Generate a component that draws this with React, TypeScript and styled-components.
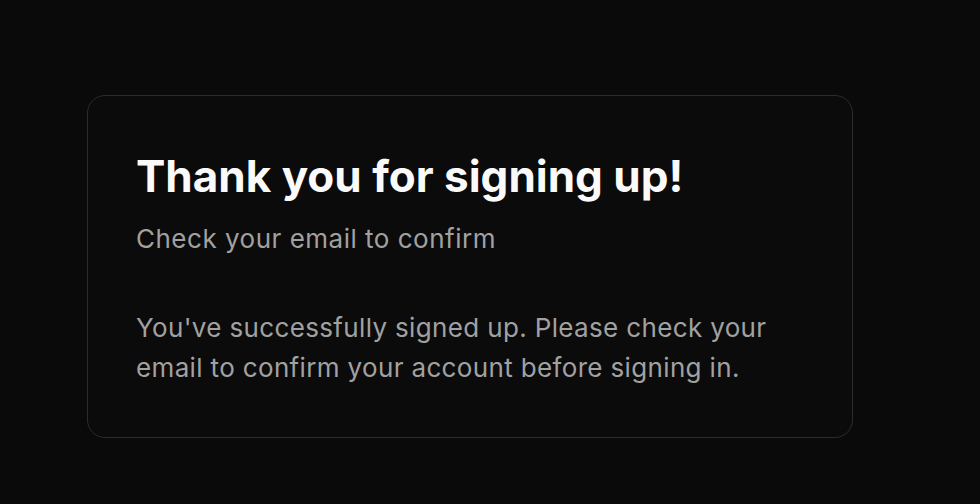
import React from "react";
import styled, { createGlobalStyle } from "styled-components";

const Global = createGlobalStyle`
  html, body { margin: 0; padding: 0; background: #0a0a0a; }
  body { font-family: Inter, "Liberation Sans", sans-serif; -webkit-font-smoothing: antialiased; }
`;

const Page = styled.div`
  padding: 95px 0 0 87px;
  height: 504px;
  box-sizing: border-box;
`;

const Card = styled.div`
  width: 766px;
  height: 343px;
  box-sizing: border-box;
  border: 1.5px solid #2c2c2c;
  border-radius: 18px;
  background: #0b0b0b;
  padding: 48px 48px;
  display: flex;
  flex-direction: column;
`;

const Title = styled.h1`
  margin: 0;
  color: #fafafa;
  font-size: 44px;
  font-weight: 700;
  letter-spacing: 0;
  line-height: 64px;
`;

const Subtitle = styled.p`
  margin: 11px 0 0;
  color: #a1a1a1;
  font-size: 26px;
  letter-spacing: 0.5px;
  line-height: 40px;
`;

const Body = styled.p`
  margin: 49px 0 0;
  max-width: 650px;
  color: #a1a1a1;
  font-size: 26px;
  letter-spacing: 0.35px;
  line-height: 40px;
`;

export default function App() {
  return (
    <>
      <Global />
      <Page>
        <Card>
          <Title>Thank you for signing up!</Title>
          <Subtitle>Check your email to confirm</Subtitle>
          <Body>
            You've successfully signed up. Please check your email to confirm your account before signing in.
          </Body>
        </Card>
      </Page>
    </>
  );
}
